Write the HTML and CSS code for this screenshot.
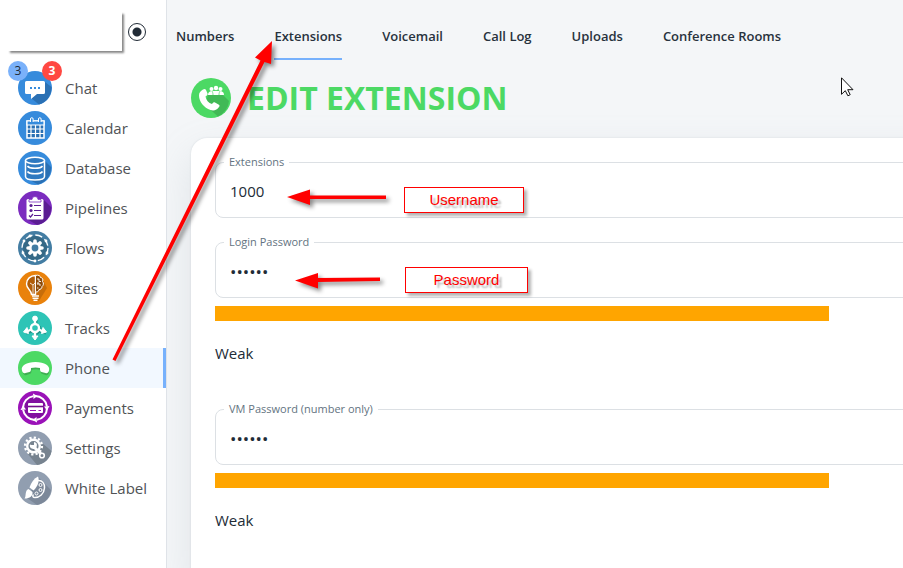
FILE: index.html
```html
<!DOCTYPE html>
<html lang="en">
<head>
  <meta charset="UTF-8">
  <meta name="viewport" content="width=device-width, initial-scale=1.0">
  <title>Edit Extension</title>
  <link rel="stylesheet" href="styles.css">
</head>
<body>

  <div class="app">
    <aside class="sidebar">
      <div class="account">
        <div class="account-name"></div>
        <input type="radio" class="pin" aria-label="Pin menu" checked>
      </div>

      <nav class="menu">
        <a href="#" class="menu-item">
          <span class="menu-icon">
            <svg viewBox="0 0 34 34">
              <circle cx="17" cy="17" r="17" fill="#368bdc"/>
              <path d="M27 11L33.500 16A17 17 0 0 1 21 33.500L13 27Z" fill="#2a70b4"/>
              <path d="M8.500 10h17A1.500 1.500 0 0 1 27 11.500v10a1.500 1.500 0 0 1-1.500 1.500H19l-6 5v-5H8.500A1.500 1.500 0 0 1 7 21.500v-10A1.500 1.500 0 0 1 8.500 10Z" fill="#fff"/>
              <path d="M12 16h2v2h-2zM16 16h2v2h-2zM20 16h2v2h-2z" fill="#368bdc"/>
            </svg>
            <span class="badge badge-blue">3</span>
            <span class="badge badge-red">3</span>
          </span>
          Chat
        </a>
        <a href="#" class="menu-item">
          <span class="menu-icon">
            <svg viewBox="0 0 34 34">
              <circle cx="17" cy="17" r="17" fill="#368bdc"/>
              <path d="M9 10h17v17H9z" fill="#2a70b4" stroke="#fff" stroke-width="1.500"/>
              <path d="M9 10h17v4H9zM9 18h17M9 22.500h17M13 14v13M17.500 14v13M22 14v13" fill="#368bdc" stroke="#fff" stroke-width="1.200"/>
              <path d="M12.500 11V8a1.300 1.300 0 0 1 2.600 0v3M20.500 11V8a1.300 1.300 0 0 1 2.600 0v3" fill="#368bdc" stroke="#fff"/>
            </svg>
          </span>
          Calendar
        </a>
        <a href="#" class="menu-item">
          <span class="menu-icon">
            <svg viewBox="0 0 34 34">
              <circle cx="17" cy="17" r="17" fill="#368bdc"/>
              <path d="M26 9l7 7A17 17 0 0 1 20 33.500L10 28Z" fill="#2a70b4"/>
              <g fill="#2f79c0" stroke="#fff" stroke-width="1.500">
                <path d="M7.500 9.500v16c0 4.600 19 4.600 19 0v-16"/>
                <ellipse cx="17" cy="9.500" rx="9.500" ry="3.200"/>
                <path d="M9.500 15c2 3 13 3 15 0M9.500 20.500c2 3 13 3 15 0" fill="none"/>
              </g>
            </svg>
          </span>
          Database
        </a>
        <a href="#" class="menu-item">
          <span class="menu-icon">
            <svg viewBox="0 0 34 34">
              <circle cx="17" cy="17" r="17" fill="#7b2cbf"/>
              <path d="M26 9l7 7A17 17 0 0 1 19 34L9 28Z" fill="#5b1d93"/>
              <rect x="8.500" y="8" width="17" height="20.500" rx="1.500" fill="#fff"/>
              <path d="M11 11V8.500h3a3 3 0 0 1 6 0h3V11Z" fill="#fff" stroke="#7b2cbf" stroke-width="0.800"/>
              <circle cx="13" cy="14.500" r="1.600" fill="#5b1d93"/>
              <circle cx="13" cy="19.500" r="1.600" fill="#5b1d93"/>
              <path d="M16 14.500h7M16 19.500h7M16 24.500h7M11 24.500l1.500 1.500 2.500-3" fill="none" stroke="#5b1d93" stroke-width="1.200"/>
            </svg>
          </span>
          Pipelines
        </a>
        <a href="#" class="menu-item">
          <span class="menu-icon">
            <svg viewBox="0 0 34 34">
              <circle cx="17" cy="17" r="17" fill="#437da3"/>
              <circle cx="17" cy="17" r="12" fill="#356987"/>
              <circle cx="17" cy="17" r="13" fill="none" stroke="#fff" stroke-width="1.300" stroke-dasharray="7.200 3"/>
              <path d="M17 10v14M10 17h14M12 12l10 10M22 12L12 22" stroke="#fff" stroke-width="3.600" stroke-linecap="round"/>
              <circle cx="17" cy="17" r="6" fill="#fff"/>
              <circle cx="17" cy="17" r="3.400" fill="#437da3"/>
              <g fill="#fff">
                <circle cx="12" cy="5" r="1.400"/><circle cx="28" cy="10" r="1.400"/>
                <circle cx="29" cy="22" r="1.400"/><circle cx="17" cy="30" r="1.400"/>
                <circle cx="5" cy="22" r="1.400"/><circle cx="6" cy="10" r="1.400"/>
              </g>
            </svg>
          </span>
          Flows
        </a>
        <a href="#" class="menu-item">
          <span class="menu-icon">
            <svg viewBox="0 0 34 34">
              <circle cx="17" cy="17" r="17" fill="#e9820c"/>
              <path d="M25 9l4 8-8 13-7-2Z" fill="#c76d0a"/>
              <path d="M17.500 4.500c-5 0-9 3.500-9 8.500 0 5 5 6 5 10.500h4Z" fill="#b05c08" stroke="#fff" stroke-width="1.400"/>
              <path d="M12 12l3 2v9M15 14l2-2" fill="none" stroke="#fff" stroke-width="0.800"/>
              <path d="M17.500 4.500c3-1 5 .5 5 2 2 0 3 2 2 4 1.500 1.500 1 4-.5 5 0 2-1.500 3-3 3 0 2-2 3-3.500 2Z" fill="#8d4b0a" stroke="#fff"/>
              <path d="M19 8h2v2.500h2M19 13h3v2M19 17h1.500M20 11v2" fill="none" stroke="#fff" stroke-width="0.900"/>
              <path d="M14 25h7M14.500 27.200h6M15.500 29.200h4" stroke="#fff" stroke-width="1.400"/>
            </svg>
          </span>
          Sites
        </a>
        <a href="#" class="menu-item">
          <span class="menu-icon">
            <svg viewBox="0 0 34 34">
              <circle cx="17" cy="17" r="17" fill="#2ec4b6"/>
              <g fill="#1f9489" stroke="#1f9489" transform="translate(1 1)">
                <circle cx="17" cy="17" r="5"/><path d="M17 8v18M13 19l-6 2M21 19l6 2" stroke-width="3"/>
              </g>
              <g fill="#fff" stroke="#fff">
                <path d="M17 8v5M17 21v5M13 18.500l-4 2M21 18.500l4 2" stroke-width="2.400"/>
                <circle cx="17" cy="7.500" r="2.400"/>
                <path d="M14 25h6l-3 4zM9 16.500l1.500 6-5-1.500zM25 16.500l-1.500 6 5-1.500z"/>
                <circle cx="17" cy="17" r="4" fill="#2ec4b6" stroke-width="2.400"/>
              </g>
            </svg>
          </span>
          Tracks
        </a>
        <a href="#" class="menu-item active">
          <span class="menu-icon">
            <svg viewBox="0 0 34 34">
              <circle cx="17" cy="17" r="17" fill="#4cd964"/>
              <path d="M5 21.500C3.500 17 9 13 18 13S32.500 18 31 21.500c-.5 2.500-2 3-3.500 2.500l-3-1c-2-.5-2-2-2-4-3-1-6-1-9 0 0 2 0 3.500-2 4l-3 1c-1.500.5-3 0-3.500-2.500Z" fill="#3fae52"/>
              <path d="M4 19.500C2.500 15 8.500 11 17.500 11S32.500 15 31 19.500c-.5 2.500-2 3-3.500 2.500l-4-1c-1.500-.5-1.500-2-1.500-4-3-.7-6-.7-9 0 0 2 0 3.500-1.500 4l-4 1c-1.500.5-3 0-3.500-2.500Z" fill="#fff"/>
            </svg>
          </span>
          Phone
        </a>
        <a href="#" class="menu-item">
          <span class="menu-icon">
            <svg viewBox="0 0 34 34">
              <circle cx="17" cy="17" r="17" fill="#9a12b8"/>
              <circle cx="17" cy="17" r="11" fill="#820fa0"/>
              <circle cx="17" cy="17" r="12" fill="none" stroke="#fff" stroke-width="2" stroke-dasharray="16.800 2"/>
              <path d="M15 2.500l4.500 2.500-4 3zM31.500 15L29 19.500l-3-4zM19 31.500L14.500 29l4-3zM2.500 19L5 14.500l3 4z" fill="#fff"/>
              <rect x="10" y="12" width="15" height="10" rx="1" fill="#fff"/>
              <path d="M10 15.500h15" stroke="#720c8b" stroke-width="1.600"/>
              <path d="M12 19.500h6M20.500 19.500h2.500" stroke="#9a12b8"/>
            </svg>
          </span>
          Payments
        </a>
        <a href="#" class="menu-item">
          <span class="menu-icon">
            <svg viewBox="0 0 34 34">
              <circle cx="17" cy="17" r="17" fill="#919eb0"/>
              <path d="M23 11l10.500 9A17 17 0 0 1 19 34L9 22Z" fill="#77838f"/>
              <circle cx="15.500" cy="15" r="8.400" fill="none" stroke="#fff" stroke-width="2.400" stroke-dasharray="2.200 2.198"/>
              <circle cx="15.500" cy="15" r="6.300" fill="#77838f" stroke="#fff" stroke-width="2.400"/>
              <path d="M15 15l8 8" stroke="#fff" stroke-width="3"/>
              <path d="M12 13.500a3.500 3.500 0 1 0 4-2.500v3h-2.500Z" fill="#fff"/>
              <circle cx="24" cy="24.500" r="2.300" fill="#77838f" stroke="#fff" stroke-width="1.600"/>
            </svg>
          </span>
          Settings
        </a>
        <a href="#" class="menu-item">
          <span class="menu-icon">
            <svg viewBox="0 0 34 34">
              <circle cx="17" cy="17" r="17" fill="#919eb0"/>
              <path d="M21 7l12 12A17 17 0 0 1 19 34L9 27Z" fill="#7c8899"/>
              <path d="M20 9.500c4-.5 7 3 6.500 7.500-.5 6-5 9.500-9.500 9.500-2 0-3-1.500-1.500-3" fill="none" stroke="#fff" stroke-width="1.500"/>
              <g fill="none" stroke="#fff">
                <circle cx="22.500" cy="14" r="1.500"/><circle cx="22.500" cy="19" r="1.500"/><circle cx="18.500" cy="22.500" r="1.500"/>
              </g>
              <path d="M20 5.500c1.500 4 .5 9-4.500 14l-4-3C13.500 11 16 7.500 20 5.500Z" fill="#fff"/>
              <path d="M10.500 18l4 3c.5 4-2.500 6.500-8 6.500 2-2 0-8 4-9.500Z" fill="#fff"/>
            </svg>
          </span>
          White Label
        </a>
      </nav>
    </aside>

    <main class="main">
      <nav class="tabs">
        <a href="#" class="tab">Numbers</a>
        <a href="#" class="tab selected">Extensions</a>
        <a href="#" class="tab">Voicemail</a>
        <a href="#" class="tab">Call Log</a>
        <a href="#" class="tab">Uploads</a>
        <a href="#" class="tab">Conference Rooms</a>
      </nav>

      <header class="page-title">
        <svg class="title-icon" viewBox="0 0 40 40">
          <circle cx="20" cy="20" r="20" fill="#4cd964"/>
          <path d="M31 16l7 7A20 20 0 0 1 27 38.500L14 27l3-10Z" fill="#41b956"/>
          <path d="M12 11.500c1.500-1 2.500-.5 3 .5l1.500 3.500c.5 1-.5 2-2 3 .5 3.500 3 6.500 6.500 7.500 1-1.500 2-2 3-1.500l3.500 2c1 .5 1.500 1.500.5 2.500-2 3-5 4-8.500 3C13 30 8 23.500 8 17.500c0-3 1.500-4.500 4-6Z" fill="#fff"/>
          <g fill="#fff">
            <circle cx="20.500" cy="11" r="2"/><circle cx="25" cy="10" r="2.200"/><circle cx="29.500" cy="11" r="2"/>
            <path d="M17 17c0-3 2-4 4-4l4 0h4c2 0 4 1 4 4Z"/>
          </g>
          <path d="M22 17c0-2-.5-3-1-4M28 17c0-2 .5-3 1-4" fill="none" stroke="#4cd964" stroke-width="0.700"/>
        </svg>
        <h1>EDIT EXTENSION</h1>
      </header>

      <form class="card">
        <fieldset class="field">
          <legend><label for="extension">Extensions</label></legend>
          <input type="text" id="extension" name="extension" value="1000">
        </fieldset>

        <fieldset class="field">
          <legend><label for="loginPassword">Login Password</label></legend>
          <input type="password" id="loginPassword" name="loginPassword" value="123456">
        </fieldset>
        <div class="strength"><div class="strength-bar" style="width: 75%"></div></div>
        <p class="strength-text">Weak</p>

        <fieldset class="field">
          <legend><label for="vmPassword">VM Password (number only)</label></legend>
          <input type="password" id="vmPassword" name="vmPassword" value="123456">
        </fieldset>
        <div class="strength"><div class="strength-bar" style="width: 75%"></div></div>
        <p class="strength-text">Weak</p>
      </form>
    </main>
  </div>

  <!-- notes drawn over the page -->
  <svg class="arrows" width="903" height="568" viewBox="0 0 903 568">
    <g fill="#f00">
      <path d="M112.500 359.500L260.500 60.500l-5.500-3L272 41l-1 23-6.500-2L115.500 361Z"/>
      <path d="M287 197l23-7.500v6h76v3.500h-76v6Z"/>
      <path d="M295 280.500l23-7.500v5l62-.5v3.500l-62 1v6.500Z"/>
    </g>
  </svg>
  <div class="note note-user">Username</div>
  <div class="note note-pass">Password</div>
  <svg class="cursor" width="13" height="20" viewBox="0 0 13 20">
    <path d="M.5.800v16.500l3.800-3.600 2.600 5.100 2.300-1.100-2.500-5h5.300Z" fill="#fff" stroke="#111"/>
  </svg>

</body>
</html>
```
FILE: styles.css
```css
body {
  font-family: 'Open Sans', 'Noto Sans', sans-serif;
  background-color: #f4f6f8;
  color: #212b36;
  margin: 0;
  position: relative;
}

.app {
  display: flex;
  height: 100vh;
  overflow: hidden;
}

/* left menu */
.sidebar {
  flex: 0 0 166px;
  background-color: #fff;
  border-right: 1px solid #dfe3e8;
}

.account {
  display: flex;
  align-items: center;
  gap: 6px;
  padding: 12px 20px 0 8px;
}

.account-name {
  flex: 1;
  height: 39px;
  background-color: #fff;
  box-shadow: 2px 2px 2px #888;
}

.pin {
  appearance: none;
  width: 18px;
  height: 18px;
  margin: 0;
  border: 1px solid #212b36;
  border-radius: 50%;
  background: radial-gradient(circle, #212b36 4px, #fff 5px);
}

.menu {
  padding-top: 17px;
}

.menu-item {
  display: flex;
  align-items: center;
  gap: 13px;
  height: 40px;
  padding-left: 18px;
  color: #505356;
  font-size: 15px;
  text-decoration: none;
}

.menu-item.active {
  background-color: #f2f8ff;
  border-right: 3px solid #77b1fc;
}

.menu-icon {
  position: relative;
  width: 34px;
  height: 34px;
}

.menu-icon svg {
  display: block;
}

.badge {
  position: absolute;
  top: -10px;
  width: 20px;
  height: 20px;
  border-radius: 50%;
  font-size: 12px;
  line-height: 20px;
  text-align: center;
}

.badge-blue {
  left: -10px;
  background-color: #7ab1fa;
  color: #212b36;
}

.badge-red {
  right: -10px;
  background-color: #ff4842;
  color: #fff;
  font-weight: bold;
}

/* content */
.main {
  flex: 1;
  min-width: 0;
  display: flex;
  flex-direction: column;
  overflow: hidden;
}

.tabs {
  display: flex;
  gap: 40px;
  padding: 12px 0 0 9px;
}

.tab {
  height: 46px;
  line-height: 48px;
  border-bottom: 2px solid transparent;
  color: #28323d;
  font-size: 13px;
  font-weight: 600;
  text-decoration: none;
  white-space: nowrap;
}

.tab.selected {
  border-bottom-color: #77b1fc;
}

.page-title {
  display: flex;
  align-items: center;
  gap: 16px;
  padding: 18px 24px 20px;
}

.title-icon {
  width: 40px;
  height: 40px;
}

h1 {
  margin: 0;
  color: #4cd964;
  font-size: 32px;
  line-height: 40px;
}

/* the card runs on past the right edge of the window */
.card {
  flex: 1 0 auto;
  margin: 0 -155px 0 24px;
  padding: 16px 24px;
  background-color: #fff;
  border-radius: 16px;
  box-shadow: 0 0 2px rgba(145, 158, 171, 0.3), 0 16px 40px rgba(145, 158, 171, 0.2);
}

.field {
  margin: 0 0 16px;
  padding: 0 14px 5px;
  border: 1px solid #dce0e4;
  border-radius: 8px;
}

.field legend {
  margin-left: -6px;
  padding: 0 5px;
  color: #637381;
  font-size: 11px;
  line-height: 16px;
}

.field input {
  display: block;
  width: 100%;
  height: 42px;
  padding: 0;
  border: none;
  outline: none;
  background: none;
  color: #212b36;
  font-family: inherit;
  font-size: 15px;
}

.field input[type="password"] {
  font-size: 17px;
}

.strength {
  margin-top: -8px;
}

.strength-bar {
  height: 15px;
  background-color: #ffa500;
}

.strength-text {
  margin: 20px 0 36px;
  font-size: 15px;
  line-height: 24px;
}

/* notes */
.arrows {
  position: absolute;
  top: 0;
  left: 0;
  pointer-events: none;
  filter: drop-shadow(3px 3px 2px rgba(0, 0, 0, 0.45));
}

.note {
  position: absolute;
  box-sizing: border-box;
  height: 26px;
  border: 1px solid #f00;
  background-color: #fff;
  box-shadow: 3px 3px 3px rgba(0, 0, 0, 0.3);
  color: #f00;
  font-family: 'Liberation Sans', Arial, sans-serif;
  font-size: 15px;
  line-height: 24px;
  text-align: center;
  text-shadow: 3px 3px 2px rgba(0, 0, 0, 0.3);
}

.note-user {
  top: 187px;
  left: 404px;
  width: 120px;
}

.note-pass {
  top: 267px;
  left: 405px;
  width: 123px;
}

.cursor {
  position: absolute;
  top: 77px;
  left: 841px;
}
```
